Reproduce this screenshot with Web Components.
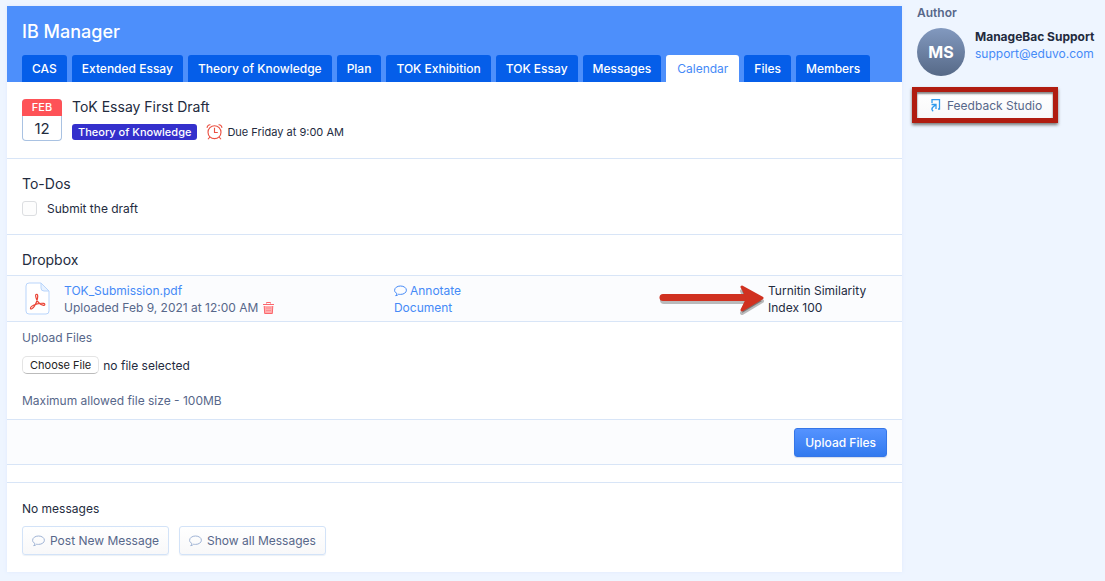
<!DOCTYPE html>
<html lang="en">
<head>
<meta charset="utf-8">
<title>IB Manager</title>
<style>
  body {
    margin: 0;
    background: #eef5ff;
    color: #232b3e;
    font: 12px/17px Inter, "Open Sans", sans-serif;
  }
</style>
</head>
<body>
<manager-page>
  <page-header slot="main" heading="IB Manager">
    <nav-tab>CAS</nav-tab>
    <nav-tab>Extended Essay</nav-tab>
    <nav-tab>Theory of Knowledge</nav-tab>
    <nav-tab>Plan</nav-tab>
    <nav-tab>TOK Exhibition</nav-tab>
    <nav-tab>TOK Essay</nav-tab>
    <nav-tab>Messages</nav-tab>
    <nav-tab current>Calendar</nav-tab>
    <nav-tab>Files</nav-tab>
    <nav-tab>Members</nav-tab>
  </page-header>
  <event-summary slot="main" month="FEB" day="12">
    <span slot="title">ToK Essay First Draft</span>
    <span slot="tag">Theory of Knowledge</span>
    <span slot="due">Due Friday at 9:00 AM</span>
  </event-summary>
  <todo-list slot="main"></todo-list>
  <drop-box slot="main"></drop-box>
  <message-panel slot="main"></message-panel>
  <author-panel slot="side"></author-panel>
</manager-page>

<script>
  const define = (name, html, setup) => {
    const template = document.createElement('template');
    template.innerHTML = '<style>*{box-sizing:border-box}:host{display:block}h1,h2,p{margin:0;font-weight:400}a{color:#458af7;text-decoration:none}button,input{font:inherit}svg{display:block;flex:none}</style>' + html;
    customElements.define(name, class extends HTMLElement {
      connectedCallback() {
        if (this.shadowRoot) return;
        const root = this.attachShadow({ mode: 'open' });
        root.append(template.content.cloneNode(true));
        if (setup) setup(this, root);
      }
    });
  };

  const bubble = '<svg width="13" height="12" viewBox="0 0 13 12" fill="none" stroke="currentColor"><path d="M2.8 8.4C1.4 7.7.6 6.6.6 5.3.6 2.8 3.2 1 6.5 1s5.9 1.8 5.9 4.2-2.6 4.2-5.9 4.2c-.6 0-1.2 0-1.8-.2-.8.8-1.8 1.4-3 1.5.7-.7 1-1.4 1.1-2.3Z"/></svg>';

  define('manager-page', `
    <style>
      :host { display: flex; gap: 15px; padding: 6px 0 9px 7px; }
      main { flex: 1; min-width: 0; background: #fff; box-shadow: 0 0 4px #dfeafc; }
      aside { flex: 0 0 188px; }
    </style>
    <main><slot name="main"></slot></main>
    <aside><slot name="side"></slot></aside>`);

  define('page-header', `
    <style>
      :host { background: #4d8ffb; color: #fff; padding: 14px 15px 0; }
      h1 { font-size: 18px; line-height: 24px; font-weight: 500; }
      nav { display: flex; gap: 5px; margin-top: 11px; }
    </style>
    <h1></h1>
    <nav><slot></slot></nav>`,
    (host, root) => { root.querySelector('h1').textContent = host.getAttribute('heading'); });

  define('nav-tab', `
    <style>
      a { display: block; padding: 5px 10px; border-radius: 3px 3px 0 0; background: #055ee9; color: #fff; font-weight: 500; white-space: nowrap; }
      :host([current]) a { background: #fff; color: #458af7; font-weight: 400; padding: 5px 11px; }
    </style>
    <a href="#"><slot></slot></a>`);

  define('event-summary', `
    <style>
      :host { display: flex; gap: 10px; padding: 17px 15px; border-bottom: 1px solid #d8e5f7; }
      time { width: 40px; height: 42px; display: flex; flex-direction: column; text-align: center; border: 1px solid #a9c2e2; border-top: 0; border-radius: 4px; }
      .month { margin: 0 -1px; background: #fe5257; color: #fff; border-radius: 4px 4px 0 0; font-size: 11px; font-weight: 500; }
      .day { font-size: 15px; line-height: 25px; }
      h2 { font-size: 14px; line-height: 16px; }
      .meta { display: flex; align-items: center; gap: 9px; margin-top: 9px; line-height: 16px; font-size: 11px; }
      .tag { background: #3430cc; color: #fff; font-weight: 500; padding: 0 6px; border-radius: 3px; }
      .due { display: flex; align-items: center; gap: 4px; }
    </style>
    <time datetime="2021-02-12"><span class="month"></span><span class="day"></span></time>
    <div>
      <h2><slot name="title"></slot></h2>
      <div class="meta">
        <span class="tag"><slot name="tag"></slot></span>
        <span class="due">
          <svg width="17" height="16" viewBox="0 0 17 17" fill="none" stroke="#eb5244" stroke-width="1.200"><circle cx="8.500" cy="8.700" r="6.900"/><path d="M8.500 4v5H12M.8 4.200C.4 2.400 2.200.5 4.200.8M16.200 4.200c.4-1.800-1.400-3.700-3.400-3.400M3.600 13.800l-2 2.400M13.400 13.800l2 2.400"/></svg>
          <slot name="due"></slot>
        </span>
      </div>
    </div>`,
    (host, root) => {
      root.querySelector('.month').textContent = host.getAttribute('month');
      root.querySelector('.day').textContent = host.getAttribute('day');
    });

  define('todo-list', `
    <style>
      :host { padding: 16px 15px 17px; border-bottom: 1px solid #d8e5f7; }
      h2 { font-size: 14px; line-height: 18px; }
      label { display: flex; align-items: center; gap: 10px; margin-top: 7px; }
      input { appearance: none; width: 15px; height: 15px; margin: 0; border: 1px solid #dcdee1; border-radius: 3px; background: #fdfdfd; }
      input:checked { background: #458af7; }
    </style>
    <h2>To-Dos</h2>
    <label><input type="checkbox">Submit the draft</label>`);

  define('drop-box', `
    <style>
      h2 { font-size: 14px; line-height: 18px; padding: 16px 15px 6px; }
      .row { display: grid; grid-template-columns: 43% 10% 1fr 119px; align-items: center; padding: 6px 15px 5px; border: solid #d8e5f7; border-width: 1px 0; background: #fbfcfe; }
      .file { display: flex; gap: 14px; padding-left: 3px; color: #57678a; }
      .stamp { display: flex; align-items: center; gap: 5px; }
      .trash { border: 0; padding: 0; background: none; }
      .note svg { display: inline-block; vertical-align: -2px; margin-right: 3px; }
      .score { position: relative; grid-column: 4; }
      .arrow { position: absolute; right: 100%; top: 1px; margin-right: 3px; }
      .upload { padding: 7px 15px 10px; color: #57678a; }
      .picker { display: flex; align-items: center; gap: 4px; margin: 10px 0 18px; color: #232b3e; }
      .picker button { font-size: 11px; line-height: 16px; padding: 0 7px; border: 1px solid #e4e4e4; border-bottom-color: #bbb; border-radius: 5px; background: #fff; color: #222; }
      .actions { display: flex; justify-content: flex-end; padding: 8px 15px 7px; border: solid #d8e5f7; border-width: 1px 0; background: #fbfcfe; }
      .primary { height: 29px; padding: 0 10px; border: 1px solid #3576e8; border-radius: 3px; background: linear-gradient(#5593ff, #327aef); color: #fff; font-weight: 500; box-shadow: 0 1px 1px #d3dceb; }
      .rule { height: 17px; }
    </style>
    <h2>Dropbox</h2>
    <div class="row">
      <div class="file">
        <svg width="25" height="33" viewBox="0 0 25 33" fill="none"><path d="M4 1h12l8 8v20q0 3-3 3H4q-3 0-3-3V4q0-3 3-3Z" fill="#fff" stroke="#b9d5fb"/><path d="M16 1v5q0 3 3 3h5Z" fill="#e8f2ff" stroke="#b9d5fb"/><path d="M11 12.500c1.500-.8 2.200.8 1.400 4.300-1 3.800-3.600 8.800-5.600 10-1.600.8-1.900-1-.2-2.400 2.500-2 8.500-3.600 12-3 2 .5 1.300 2.400-.6 1.800-2.500-.7-5.500-3.600-6.600-6.300-.7-2-1-4-.4-4.400Z" stroke="#ea4436" stroke-width="1.200"/></svg>
        <div>
          <a href="#">TOK_Submission.pdf</a>
          <div class="stamp">Uploaded Feb 9, 2021 at 12:00 AM
            <button class="trash" aria-label="Delete file"><svg width="11" height="12" viewBox="0 0 11 12"><path d="M1 4h9l-.6 7.500q0 .5-.8.5H2.400q-.8 0-.8-.5Z" fill="#ffadae"/><path d="M3.500 1.500V.5h4v1M0 2.500h11M1.200 4l.5 7.500h7.600l.5-7.500" fill="none" stroke="#fb666c"/><path d="M3 6h5M3 8.500h5" stroke="#fd8b8f"/></svg></button>
          </div>
        </div>
      </div>
      <a class="note" href="#">${bubble}Annotate Document</a>
      <div class="score">
        <svg class="arrow" width="108" height="34" viewBox="0 0 108 34" aria-hidden="true"><g fill="none" stroke-linecap="round" stroke-linejoin="round"><path d="M7 17h82" stroke="#777" stroke-opacity=".5" stroke-width="8"/><path d="M85 8l20 10-20 12 5-12Z" fill="#777" stroke="#777" stroke-opacity=".5" stroke-width="4"/><path d="M6 14.500h84" stroke="#d03120" stroke-width="7"/><path d="M85 4l20 11-20 12 6-12Z" fill="#d03120" stroke="#d03120" stroke-width="3"/></g></svg>
        Turnitin Similarity Index 100
      </div>
    </div>
    <div class="upload">
      <div id="caption">Upload Files</div>
      <div class="picker"><input type="file" hidden aria-labelledby="caption"><button type="button">Choose File</button><span>no file selected</span></div>
      <p>Maximum allowed file size - 100MB</p>
    </div>
    <div class="actions"><button class="primary" type="button">Upload Files</button></div>
    <div class="rule"></div>`,
    (host, root) => {
      const input = root.querySelector('input');
      root.querySelector('.picker button').onclick = () => input.click();
      input.onchange = () => { root.querySelector('.picker span').textContent = input.files[0]?.name ?? 'no file selected'; };
    });

  define('soft-button', `
    <style>
      button { display: flex; align-items: center; gap: 5px; height: 29px; padding: 0 9px; border: 1px solid #d3e3f8; border-radius: 3px; background: linear-gradient(#fff, #f8f8f9); color: #57678a; white-space: nowrap; box-shadow: 0 1px 1px #edf1f6; }
      :host([compact]) button { height: 28px; border-color: #e7e9ed; padding: 0 10px 0 11px; }
      ::slotted(svg) { display: block; }
    </style>
    <button type="button"><slot name="icon"></slot><slot></slot></button>`);

  define('message-panel', `
    <style>
      :host { padding: 17px 15px; border-top: 1px solid #d8e5f7; }
      .buttons { display: flex; gap: 10px; margin-top: 9px; }
      svg { color: #9fb3d5; }
    </style>
    <p>No messages</p>
    <div class="buttons">
      <soft-button>${bubble.replace('<svg', '<svg slot="icon"')}Post New Message</soft-button>
      <soft-button>${bubble.replace('<svg', '<svg slot="icon"')}Show all Messages</soft-button>
    </div>`);

  define('author-panel', `
    <style>
      h2 { font-size: 12px; line-height: 14px; font-weight: 600; color: #57678a; }
      .person { display: flex; gap: 10px; margin: 8px 0 15px; white-space: nowrap; }
      .avatar { flex: none; width: 48px; height: 48px; border-radius: 50%; background: linear-gradient(#8299bf, #566987); color: #fff; font-size: 16px; line-height: 48px; font-weight: 700; text-align: center; }
      strong { display: block; font-weight: 700; }
      .studio { position: relative; width: fit-content; }
      .mark { position: absolute; inset: -4px -5px; border: 5px solid #b01c10; box-shadow: 0 2px 3px #777, inset 0 2px 2px #888; pointer-events: none; }
    </style>
    <h2>Author</h2>
    <div class="person">
      <span class="avatar">MS</span>
      <div><strong>ManageBac Support</strong><a href="mailto:support@eduvo.com">support@eduvo.com</a></div>
    </div>
    <div class="studio">
      <soft-button compact><svg slot="icon" width="13" height="14" viewBox="0 0 13 14" fill="none" stroke="#2f9bed" stroke-width="1.300"><path d="M3 5V1.600h7.500V11H9M2.500 6.500H7V11M7 6.500l-3.500 3q-1.500 2 .7 3.700"/></svg>Feedback Studio</soft-button>
      <span class="mark"></span>
    </div>`);
</script>
</body>
</html>
